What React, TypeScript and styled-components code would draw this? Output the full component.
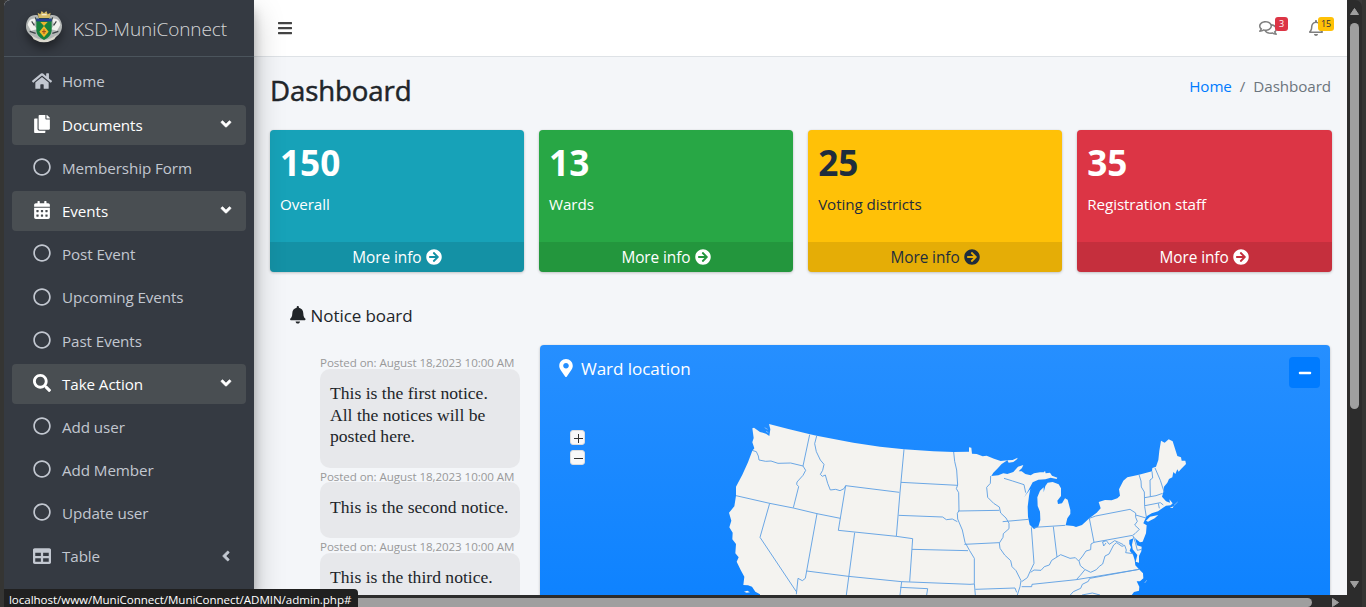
import React from "react";
import styled, { createGlobalStyle } from "styled-components";
import {
  FaHome, FaCopy, FaRegCircle, FaCalendarAlt, FaSearch, FaTable, FaAngleLeft, FaAngleDown,
  FaBars, FaRegComments, FaRegBell, FaBell, FaMapMarkerAlt, FaMinus, FaArrowCircleRight,
} from "react-icons/fa";

const Global = createGlobalStyle`
  * { box-sizing: border-box; }
  body { margin: 0; background: #333; overflow: hidden; font-family: "Open Sans", "Noto Sans", sans-serif; font-size: 15.2px; letter-spacing: -0.08px; color: #212529; }
  h1, h3, p, ul, ol { margin: 0; padding: 0; }
  ul, ol { list-style: none; }
  svg { display: block; flex: none; }
`;

const Frame = styled.div`
  position: relative;
  width: 1366px;
  height: 607px;
  display: grid;
  grid-template-columns: 4px 1343px 15px 4px;
  grid-template-rows: 595px 12px;
  background: #3a3a3a;
  overflow: hidden;
`;
const Edge = styled.div`
  grid-row: 1 / 3;
  background: #353533;
`;
const Viewport = styled.div`
  display: flex;
  background: #f4f6f9;
  overflow: hidden;
  border-top-left-radius: 6px;
`;

const Sidebar = styled.aside`
  position: relative;
  z-index: 2;
  width: 250px;
  flex: none;
  background: #353a42;
  box-shadow: 0 14px 28px rgba(0, 0, 0, 0.25), 0 10px 10px rgba(0, 0, 0, 0.22);
`;
const Brand = styled.div`
  height: 57px;
  display: flex;
  align-items: center;
  gap: 10px;
  padding: 0 0 0 21px;
  border-bottom: 1px solid #4b545c;
  color: rgba(255, 255, 255, 0.8);
  font-size: 19px;
  font-weight: 300;
  svg { filter: drop-shadow(0 6px 5px rgba(0, 0, 0, 0.4)); margin-top: -3px; }
  span { padding-top: 1px; }
`;
const Menu = styled.ul`
  padding: 4.6px 8px 0;
  display: flex;
  flex-direction: column;
  gap: 3.2px;
`;
const MenuItem = styled.li<{ $open?: boolean }>`
  height: 40px;
  display: flex;
  align-items: center;
  padding: 0 14px 0 20px;
  border-radius: 4px;
  color: ${(p) => (p.$open ? "#fff" : "#c2c7d0")};
  background: ${(p) => (p.$open ? "#494e52" : "transparent")};
`;
const MenuIcon = styled.span`
  width: 20px;
  margin: 0 10px 2px 0;
  display: flex;
  justify-content: center;
  font-size: 18px;
`;
const MenuLabel = styled.span`
  flex: 1;
  margin-top: -0.4px;
`;
const MenuArrow = styled.span`
  width: 12px;
  display: flex;
  justify-content: center;
  margin-bottom: 2px;
  path { stroke: currentColor; stroke-width: 18px; }
`;

const Main = styled.main`
  flex: 1;
  min-width: 0;
`;
const Navbar = styled.nav`
  height: 57px;
  display: flex;
  align-items: center;
  padding: 0 13px 0 23px;
  background: #fff;
  border-bottom: 1px solid #dee2e6;
  color: #444;
`;
const NavActions = styled.div`
  margin-left: auto;
  display: flex;
  gap: 20px;
`;
const NavAction = styled.span<{ $w: number }>`
  position: relative;
  width: ${(p) => p.$w}px;
  height: 20px;
  color: #7f7f7f;
  display: flex;
  align-items: center;
`;
const Badge = styled.b<{ $color: string; $ink: string; $w: number }>`
  position: absolute;
  right: 0;
  top: -1px;
  width: ${(p) => p.$w}px;
  height: 14px;
  border-radius: 3px;
  background: ${(p) => p.$color};
  color: ${(p) => p.$ink};
  font-size: 9px;
  font-weight: 400;
  line-height: 14px;
  text-align: center;
`;
const PageHeader = styled.header`
  height: 73px;
  padding: 15px 16px 0;
  display: flex;
  justify-content: space-between;
`;
const PageTitle = styled.h1`
  font-size: 27.6px;
  line-height: 37px;
  font-weight: 400;
  letter-spacing: -0.1px;
  -webkit-text-stroke: 0.5px currentColor;
`;
const Crumbs = styled.ol`
  display: flex;
  gap: 8px;
  line-height: 29px;
  color: #6c757d;
  a { color: #007bff; }
`;

const Stats = styled.section`
  display: grid;
  grid-template-columns: repeat(4, 1fr);
  gap: 14.8px;
  padding: 0 15.5px 0 16px;
`;
const Stat = styled.article<{ $bg: string; $ink: string }>`
  height: 142px;
  display: flex;
  flex-direction: column;
  justify-content: space-between;
  border-radius: 4px;
  overflow: hidden;
  background: ${(p) => p.$bg};
  color: ${(p) => p.$ink};
  box-shadow: 0 0 1px rgba(0, 0, 0, 0.125), 0 1px 3px rgba(0, 0, 0, 0.2);
`;
const StatBody = styled.div`
  padding: 10px;
  h3 { font-size: 35.2px; line-height: 44px; font-weight: 700; letter-spacing: 0; }
  p { margin-top: 8px; line-height: 24px; }
`;
const StatFooter = styled.div`
  height: 30px;
  display: flex;
  align-items: center;
  justify-content: center;
  gap: 4.5px;
  font-size: 15.4px;
  background: rgba(0, 0, 0, 0.1);
`;

const Row = styled.section`
  display: flex;
  align-items: flex-start;
`;
const Notices = styled.div`
  width: 286px;
  padding: 30px 0 0 35px;
`;
const NoticeTitle = styled.h3`
  display: flex;
  align-items: center;
  gap: 4px;
  height: 26px;
  font-size: 17px;
  font-weight: 400;
`;
const NoticeList = styled.div`
  padding: 26px 0 0 31px;
`;
const Stamp = styled.div`
  height: 14.5px;
  line-height: 17px;
  font-size: 11.6px;
  letter-spacing: -0.08px;
  color: #999;
  white-space: nowrap;
`;
const Bubble = styled.div`
  width: 200px;
  padding: 14.8px 10px 19.8px;
  border-radius: 10px;
  background: #e7e8eb;
  font: 17.6px/21.5px "Liberation Serif", serif;
  letter-spacing: 0;
  white-space: pre;
`;

const MapCard = styled.section`
  width: 790px;
  height: 400px;
  margin-top: 73px;
  border-radius: 4px;
  color: #fff;
  background: linear-gradient(180deg, #268fff, #007bff);
  box-shadow: 0 0 1px rgba(0, 0, 0, 0.125), 0 1px 3px rgba(0, 0, 0, 0.2);
`;
const MapHeader = styled.div`
  height: 65px;
  display: flex;
  justify-content: space-between;
  padding: 11px 10px 0 17px;
`;
const MapTitle = styled.h3`
  display: flex;
  align-items: center;
  gap: 6px;
  height: 24px;
  font-size: 17.1px;
  font-weight: 400;
`;
const Collapse = styled.button`
  width: 31px;
  height: 31px;
  margin-top: 1px;
  padding: 0;
  border: 0;
  border-radius: 4px;
  display: grid;
  place-items: center;
  background: #007bff;
  color: #fff;
`;
const MapBody = styled.div`
  display: flex;
  align-items: flex-start;
  padding-left: 30px;
`;
const ZoomControls = styled.div`
  width: 15px;
  margin: 20px 135px 0 0;
  display: flex;
  flex-direction: column;
  gap: 5px;
`;
const ZoomButton = styled.button`
  width: 15px;
  height: 15px;
  padding: 1px 0 0 1px;
  border: 1px solid #ddd;
  border-radius: 3px;
  background: #f8f8f8;
  display: grid;
  place-items: center;
`;

const VScroll = styled.div`
  background: #2c2c2c;
  border-top-right-radius: 7px;
  display: flex;
  flex-direction: column;
  align-items: center;
  padding: 8px 0 7px;
`;
const VThumb = styled.div`
  width: 9px;
  height: 386px;
  margin: 8px 0 auto;
  border-radius: 5px;
  background: #9f9f9f;
`;
const HScroll = styled.div`
  grid-column: 2 / 4;
  grid-row: 2;
  display: flex;
  align-items: center;
  background: #2c2c2c;
  padding: 3px 0 0 14px;
`;
const HThumb = styled.div`
  width: 1294px;
  height: 9px;
  border-radius: 5px;
  background: #9f9f9f;
  margin-right: 20px;
`;
const Status = styled.div`
  position: absolute;
  z-index: 5;
  left: 4px;
  top: 589px;
  width: 354px;
  height: 18px;
  padding: 2px 0 0 5px;
  border-top-right-radius: 4px;
  background: #202020;
  color: #fff;
  font-size: 11.6px;
  line-height: 18px;
  letter-spacing: -0.06px;
  white-space: nowrap;
`;

const Crest = () => (
  <svg width="38" height="34" viewBox="0 0 114 102">
    <path d="M38 16C20 12 4 24 3 48C2 66 16 80 42 92L72 92C98 82 112 68 111 46C108 24 94 12 76 16L70 30H44Z" fill="#b2b6b5" />
    <path d="M8 44Q12 22 34 26L26 44L36 58L18 62ZM106 44Q102 22 80 26L88 44L78 58L96 62Z" fill="#f1f1ee" />
    <path d="M20 34L28 46M94 34L86 46M14 64L32 70M100 64L82 70M31 22L35 34M83 22L79 34" stroke="#3a4044" strokeWidth="3.5" />
    <path d="M18 74Q56 104 96 74L88 88Q56 106 26 88Z" fill="#dcdacf" />
    <path d="M34 26H80V62Q78 80 57 90Q36 80 34 62Z" fill="#16803d" />
    <path d="M34 26H80V34H34Z" fill="#273e93" />
    <path d="M46 36H68L57 48Z" fill="#e9b52f" />
    <path d="M57 48L71 65L57 82L43 65Z" fill="#f0b62a" />
    <path d="M57 58V72M51 65H63" stroke="#9a4a20" strokeWidth="3" />
    <path d="M38 8L46 13L50 3L57 10L64 3L68 13L77 8L74 24H41Z" fill="#d5bb67" />
    <path d="M50 14H65" stroke="#f3ead0" strokeWidth="4" />
  </svg>
);

const land =
  "M147 42L205 57L270 73L290 77L400 98L480 110L552 118L640 124L700 126L747 125L747 112L754 113L756 131L770 132L788 139L800 137L822 146L842 153L862 151" +
  "L845 162L832 176L820 188L814 198L835 196L850 190L862 192L880 186L894 170L910 165L906 174L896 184L905 184L916 192L932 196L942 190L960 187L972 187L975 182L977 190L990 188L996 197L1012 203L1010 207L992 203L976 208L955 209L938 217L932 228L924 243L912 262" +
  "L931 237L927 258L923 290L924 320L929 344L942 357L955 350L961 330L960 305L953 288L952 262L960 242L971 232L971 247L976 228L983 218L998 216L1016 223L1023 235L1023 258L1012 272L1014 282L1026 280L1035 265L1043 269L1051 300L1051 312L1042 325L1037 346L1060 348L1068 351L1086 345L1108 325L1130 308L1142 295L1136 276L1155 270L1175 271L1192 265L1200 257L1197 238L1210 212L1222 202L1257 194L1296 184L1297 174L1308 170L1315 150L1318 122L1323 92L1334 98L1346 88L1358 94L1372 138L1383 142L1385 152L1396 152L1398 162L1384 176L1376 185L1372 178L1366 192L1360 186L1357 202L1347 207L1342 218L1332 230L1330 246L1326 260L1338 274L1350 278L1348 268L1358 280L1352 286L1338 287L1328 294L1314 304L1295 310L1280 319L1274 331L1270 340L1280 346L1278 370L1268 395L1260 397L1247 386L1239 378L1246 388L1251 406L1265 410L1264 424L1257 438L1257 458L1247 455L1252 435L1238 418L1236 404L1240 385L1228 390L1228 402L1233 412L1229 422L1239 434L1244 450L1246 466L1257 478L1269 490L1270 505L1260 514L1250 514L1258 530L1257 542L1242 546L1233 558L1233 600L120 600V553L106 545L96 530L84 526L70 525L73 500L62 480L50 455L56 442L46 430L48 402L37 388L38 368L28 352L34 332L27 308L43 289L48 257L48 230L67 194L84 157L97 122L103 115L97 97L101 84L97 55L102 53L120 66L138 71L148 78L151 58Z";

const borders = [
  "M96 121L109 125L115 138L117 150L137 154L153 153L174 160L212 159L249 168L257 181L249 196L231 216L230 223L236 230L220 293",
  "M269 74L249 168M290 78L284 101L289 125L301 150L312 163L308 181L301 193L307 199L316 195L323 220L331 240L347 238L360 242L372 236L377 227L538 247",
  "M48 257L149 280L220 294L291 311L361 325M377 227L355 361L529 379L578 386L569 515M149 280L120 382L229 545M291 311L256 505L247 512L234 505L229 553",
  "M552 118L540 247L529 379M543 217L713 226M536 316L668 321L679 329L697 327L712 335M260 483L385 499L545 515L750 523L763 522M404 368L379 555M545 515L540 555M541 532L623 536L620 555M576 418L744 422",
  "M701 126L704 154L710 180L713 225L709 236L716 248L717 302L712 310L713 327L727 360L735 397L749 422L763 445L763 520L766 555",
  "M714 303L838 301M733 403L837 398M812 198L811 220L800 232L803 262L821 280L838 291L842 309L858 324L867 340L867 356L850 371L849 382L838 399L840 415L854 435L872 452L876 470L888 482L903 512L900 530L892 555M766 538L885 534L890 547",
  "M852 205L878 213L912 224L917 248M848 335L926 328M934 352L942 460L930 485L922 503L905 515M943 352L1036 346M1000 350L1011 441L995 451L988 465L973 470L963 481L942 480L932 487",
  "M1108 325L1122 397L1113 402L1112 419L1098 423L1088 438L1076 453L1066 443L1050 445L1022 434L1011 441M1108 325L1127 318L1230 298L1247 309L1247 322L1252 334L1244 345L1258 358L1245 371L1238 376L1122 397",
  "M1077 453L1081 467L1094 478L1112 487L1129 479L1138 469L1148 462L1155 438L1167 432L1181 405L1190 398L1206 409L1214 406L1219 420L1217 428L1240 431M1147 396L1159 392L1168 403L1184 392L1196 397L1210 404M1148 396L1151 408L1158 399",
  "M905 530L935 530L936 523L1069 509L1258 478M1069 509L1081 496L1094 480M1109 505L1105 514L1087 523L1082 535L1060 545L1051 555M1086 555L1117 549L1140 555M1110 505L1257 478",
  "M1257 194L1263 213L1264 231L1273 246L1274 290L1279 321M1296 184L1298 204L1290 210L1291 260M1305 174L1321 211L1332 245M1274 263L1308 257L1328 250M1275 287L1321 278L1330 285M1315 280L1318 295M1247 315L1278 324M1239 378L1246 397L1252 421L1265 418",
];

const StatesMap = () => (
  <svg width="480" height="190" viewBox="0 0 1440 570">
    <path d={land} fill="#f4f3f0" />
    <path d="M862 151L878 150L893 143L891 148L880 156L866 158ZM1278 332L1290 320L1315 315L1304 325L1284 335ZM1349 293L1361 289L1358 294ZM72 545L82 542L90 547L80 548Z" fill="#f4f3f0" />
    <path d="M134 53L143 58M138 64L145 68M1362 286L1373 276M1274 519L1280 511" stroke="#a9cdf2" strokeWidth="2" />
    <g fill="none" stroke="#5b9ee3" strokeWidth="2.7" strokeLinejoin="round">
      {borders.map((d) => <path key={d} d={d} />)}
    </g>
  </svg>
);

const menu = [
  { icon: <FaHome size={20} />, label: "Home" },
  { icon: <FaCopy />, label: "Documents", open: true },
  { icon: <FaRegCircle />, label: "Membership Form" },
  { icon: <FaCalendarAlt />, label: "Events", open: true },
  { icon: <FaRegCircle />, label: "Post Event" },
  { icon: <FaRegCircle />, label: "Upcoming Events" },
  { icon: <FaRegCircle />, label: "Past Events" },
  { icon: <FaSearch />, label: "Take Action", open: true },
  { icon: <FaRegCircle />, label: "Add user" },
  { icon: <FaRegCircle />, label: "Add Member" },
  { icon: <FaRegCircle />, label: "Update user" },
  { icon: <FaTable />, label: "Table", closed: true },
];

const stats = [
  { value: "150", label: "Overall", bg: "#17a2b8", ink: "#fff" },
  { value: "13", label: "Wards", bg: "#28a745", ink: "#fff" },
  { value: "25", label: "Voting districts", bg: "#ffc107", ink: "#1f2d3d" },
  { value: "35", label: "Registration staff", bg: "#dc3545", ink: "#fff" },
];

const notices = [
  "This is the first notice.\nAll the notices will be\nposted here.",
  "This is the second notice.",
  "This is the third notice.",
];

export default function App() {
  return (
    <>
      <Global />
      <Frame>
        <Edge />
        <Viewport>
          <Sidebar>
            <Brand><Crest /><span>KSD-MuniConnect</span></Brand>
            <Menu>
              {menu.map((m) => (
                <MenuItem key={m.label} $open={m.open}>
                  <MenuIcon>{m.icon}</MenuIcon>
                  <MenuLabel>{m.label}</MenuLabel>
                  {m.open && <MenuArrow><FaAngleDown size={16} /></MenuArrow>}
                  {m.closed && <MenuArrow><FaAngleLeft size={16} /></MenuArrow>}
                </MenuItem>
              ))}
            </Menu>
          </Sidebar>
          <Main>
            <Navbar>
              <FaBars size={16} />
              <NavActions>
                <NavAction $w={29}><FaRegComments size={18} /><Badge $color="#dc3545" $ink="#fff" $w={13}>3</Badge></NavAction>
                <NavAction $w={26}><FaRegBell size={16} /><Badge $color="#ffc107" $ink="#1f2d3d" $w={16}>15</Badge></NavAction>
              </NavActions>
            </Navbar>
            <PageHeader>
              <PageTitle>Dashboard</PageTitle>
              <Crumbs><li><a>Home</a></li><li>/</li><li>Dashboard</li></Crumbs>
            </PageHeader>
            <Stats>
              {stats.map((s) => (
                <Stat key={s.label} $bg={s.bg} $ink={s.ink}>
                  <StatBody><h3>{s.value}</h3><p>{s.label}</p></StatBody>
                  <StatFooter>More info <FaArrowCircleRight size={16} /></StatFooter>
                </Stat>
              ))}
            </Stats>
            <Row>
              <Notices>
                <NoticeTitle><FaBell size={17.6} />Notice board</NoticeTitle>
                <NoticeList>
                  {notices.map((n) => (
                    <React.Fragment key={n}>
                      <Stamp>Posted on: August 18,2023 10:00 AM</Stamp>
                      <Bubble>{n}</Bubble>
                    </React.Fragment>
                  ))}
                </NoticeList>
              </Notices>
              <MapCard>
                <MapHeader>
                  <MapTitle><FaMapMarkerAlt size={18} />Ward location</MapTitle>
                  <Collapse><FaMinus size={14} /></Collapse>
                </MapHeader>
                <MapBody>
                  <ZoomControls>
                    <ZoomButton><svg width="9" height="9"><path d="M4.5 0V9M0 4.5H9" stroke="#333" /></svg></ZoomButton>
                    <ZoomButton><svg width="9" height="9"><path d="M0 4.5H9" stroke="#333" /></svg></ZoomButton>
                  </ZoomControls>
                  <StatesMap />
                </MapBody>
              </MapCard>
            </Row>
          </Main>
        </Viewport>
        <VScroll>
          <svg width="9" height="7"><path d="M4.5 0.5L8.5 6.5H0.5Z" fill="#9f9f9f" stroke="#9f9f9f" strokeLinejoin="round" /></svg>
          <VThumb />
          <svg width="9" height="7"><path d="M4.5 6.5L8.5 0.5H0.5Z" fill="#9f9f9f" stroke="#9f9f9f" strokeLinejoin="round" /></svg>
        </VScroll>
        <Edge />
        <HScroll>
          <HThumb />
          <svg width="7" height="9"><path d="M6.5 4.5L0.5 0.5V8.5Z" fill="#9f9f9f" stroke="#9f9f9f" strokeLinejoin="round" /></svg>
        </HScroll>
        <Status>localhost/www/MuniConnect/MuniConnect/ADMIN/admin.php#</Status>
      </Frame>
    </>
  );
}
